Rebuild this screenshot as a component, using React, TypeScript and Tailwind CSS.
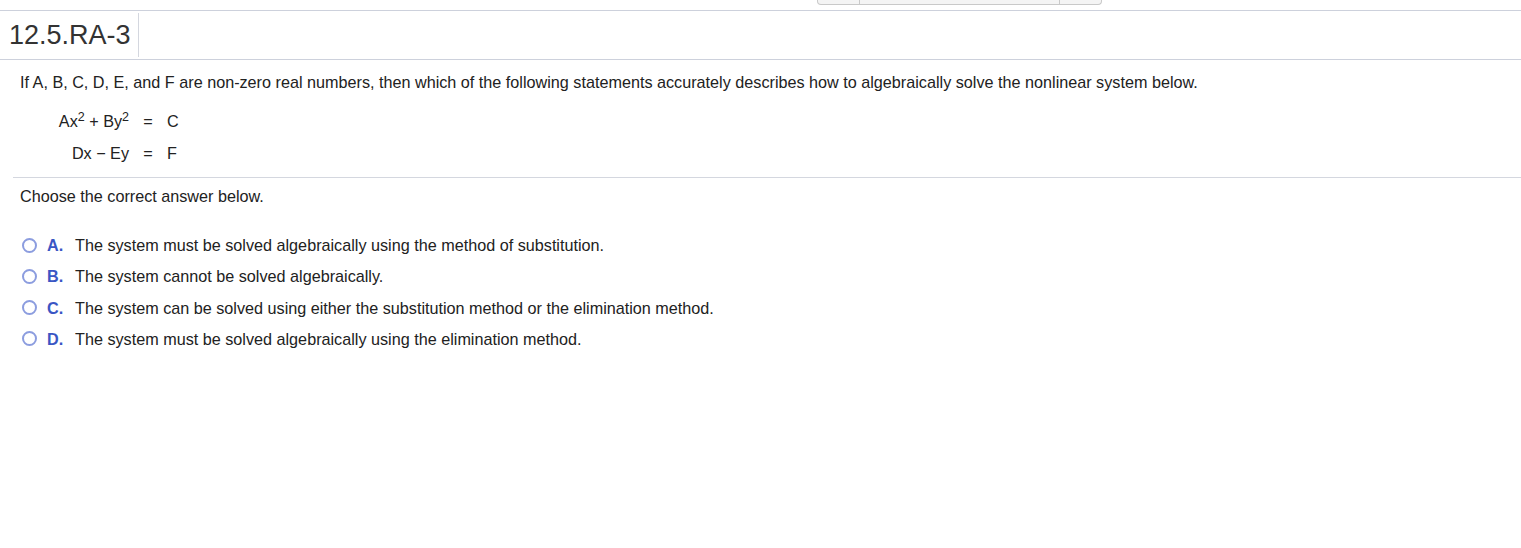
import type { JSX } from "react";

const OPTIONS = [
  { letter: "A.", text: "The system must be solved algebraically using the method of substitution." },
  { letter: "B.", text: "The system cannot be solved algebraically." },
  { letter: "C.", text: "The system can be solved using either the substitution method or the elimination method." },
  { letter: "D.", text: "The system must be solved algebraically using the elimination method." },
];

export default function App(): JSX.Element {
  return (
    <div className="h-[548px] w-full overflow-hidden bg-white font-['Liberation_Sans',Arial,sans-serif] text-[#222]">
      {/* top tab strip */}
      <div className="h-[11px] border-b border-[#cdd1dc]">
        <div className="ml-[817px] flex h-[5px] w-[285px] rounded-b-[4px] border border-t-0 border-[#c9c9c9] bg-[#f4f4f4]">
          <div className="w-[42px] border-r border-[#c9c9c9]" />
          <div className="w-[200px] border-r border-[#c9c9c9]" />
        </div>
      </div>

      {/* header */}
      <div className="flex h-[49px] border-b border-[#cdd1dc]">
        <div className="my-[2px] flex w-[139px] items-center border-r border-[#d4d7df] pl-[9px] text-[27px] leading-none text-[#333]">
          12.5.RA-3
        </div>
      </div>

      {/* question */}
      <div className="px-[20px] pt-[12px] text-[16.2px] leading-[20px]">
        <p>
          If A, B, C, D, E, and F are non-zero real numbers, then which of the following statements accurately
          describes how to algebraically solve the nonlinear system below.
        </p>
        <div className="mt-[19px] grid w-fit grid-cols-[74px_38px_auto] gap-y-[12px] pl-[35px]">
          <span className="whitespace-nowrap text-right">
            Ax<sup className="text-[12.5px]">2</sup> + By<sup className="text-[12.5px]">2</sup>
          </span>
          <span className="text-center">=</span>
          <span>C</span>
          <span className="whitespace-nowrap pr-[-2px] text-right">Dx − Ey</span>
          <span className="text-center">=</span>
          <span>F</span>
        </div>
      </div>

      <div className="ml-[13px] mt-[14px] border-b border-[#d4d7df]" />

      <div className="px-[20px] pt-[8px] text-[16.2px] leading-[20px]">
        <p>Choose the correct answer below.</p>
        <div className="mt-[29px] flex flex-col gap-[11.3px]">
          {OPTIONS.map((o) => (
            <div key={o.letter} className="flex h-[20px] items-center">
              <span className="ml-[2px] h-[15px] w-[15px] rounded-full border-2 border-[#8c9ddf]" />
              <span className="ml-[10px] w-[28px] font-bold text-[#3a56c4]">{o.letter}</span>
              <span>{o.text}</span>
            </div>
          ))}
        </div>
      </div>
    </div>
  );
}
